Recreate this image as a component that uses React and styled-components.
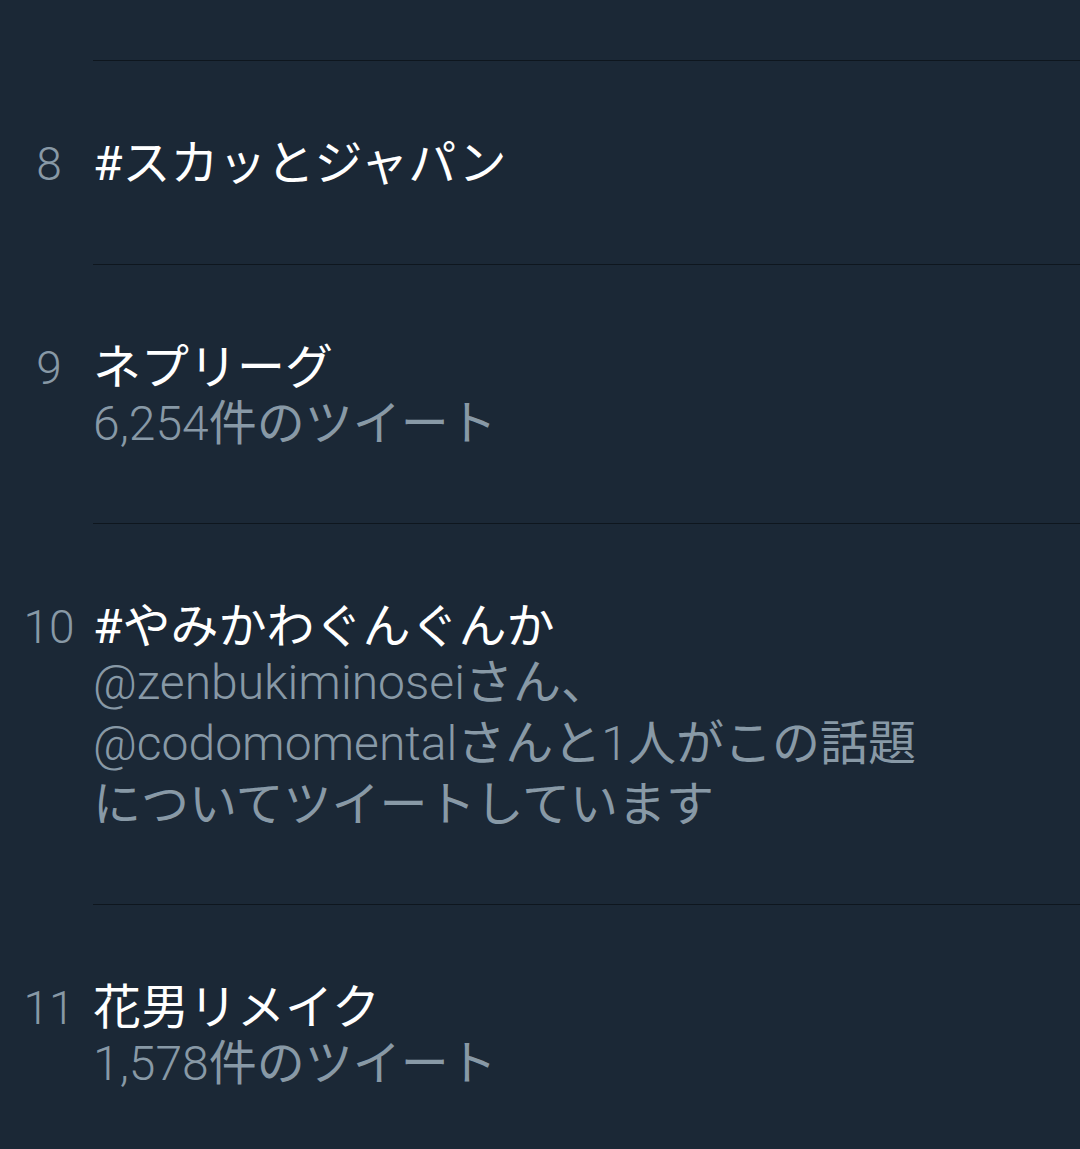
import styled, { createGlobalStyle } from 'styled-components';

const GlobalStyle = createGlobalStyle`
  html, body {
    margin: 0;
    padding: 0;
    background-color: #1b2836;
  }
  body {
    font-family: Roboto, "Noto Sans CJK JP", sans-serif;
  }
`;

const trends = [
  { rank: 8, name: '#スカッとジャパン' },
  { rank: 9, name: 'ネプリーグ', meta: '6,254件のツイート' },
  {
    rank: 10,
    name: '#やみかわぐんぐんか',
    meta: '@zenbukiminoseiさん、@codomomentalさんと1人がこの話題についてツイートしています',
  },
  { rank: 11, name: '花男リメイク', meta: '1,578件のツイート' },
];

// latin runs are drawn in Roboto Light, the kana stay regular
function splitLatin(text) {
  return text.split(/([\x21-\x7E]+)/).map((part, i) =>
    /^[\x21-\x7E]+$/.test(part) ? <Latin key={i}>{part}</Latin> : part
  );
}

export default function App() {
  return (
    <>
      <GlobalStyle />
      <TrendList>
        {trends.map((t) => (
          <TrendRow key={t.rank}>
            <Rank>{t.rank}</Rank>
            <TrendBody $tall={!t.meta}>
              <TrendName>{t.name}</TrendName>
              {t.meta && <TrendMeta>{splitLatin(t.meta)}</TrendMeta>}
            </TrendBody>
          </TrendRow>
        ))}
      </TrendList>
    </>
  );
}

const TrendList = styled.div`
  width: 1080px;
  min-height: 1149px;
  padding-top: 60px;
  box-sizing: border-box;
  background-color: #1b2836;
  display: flex;
  flex-direction: column;
`;

const TrendRow = styled.div`
  display: flex;
  align-items: flex-start;
`;

const Rank = styled.div`
  width: 88px;
  margin-left: 5px;
  padding-top: 79px;
  text-align: center;
  font-family: Roboto, sans-serif;
  font-weight: 300;
  font-size: 46px;
  line-height: 50px;
  color: #8899a6;
`;

const TrendBody = styled.div`
  flex: 1;
  border-top: 1.5px solid #0e161e;
  padding: 78px 0 ${(p) => (p.$tall ? '75px' : '69px')};
  display: flex;
  flex-direction: column;
`;

const TrendName = styled.div`
  font-family: Roboto, "Noto Sans CJK JP", sans-serif;
  font-size: 48px;
  line-height: 50px;
  color: #ffffff;
`;

const TrendMeta = styled.div`
  max-width: 850px;
  font-family: Roboto, "Noto Sans CJK JP", sans-serif;
  font-weight: 400;
  font-size: 48px;
  line-height: 61px;
  color: #8899a6;
`;

const Latin = styled.span`
  font-weight: 300;
`;
